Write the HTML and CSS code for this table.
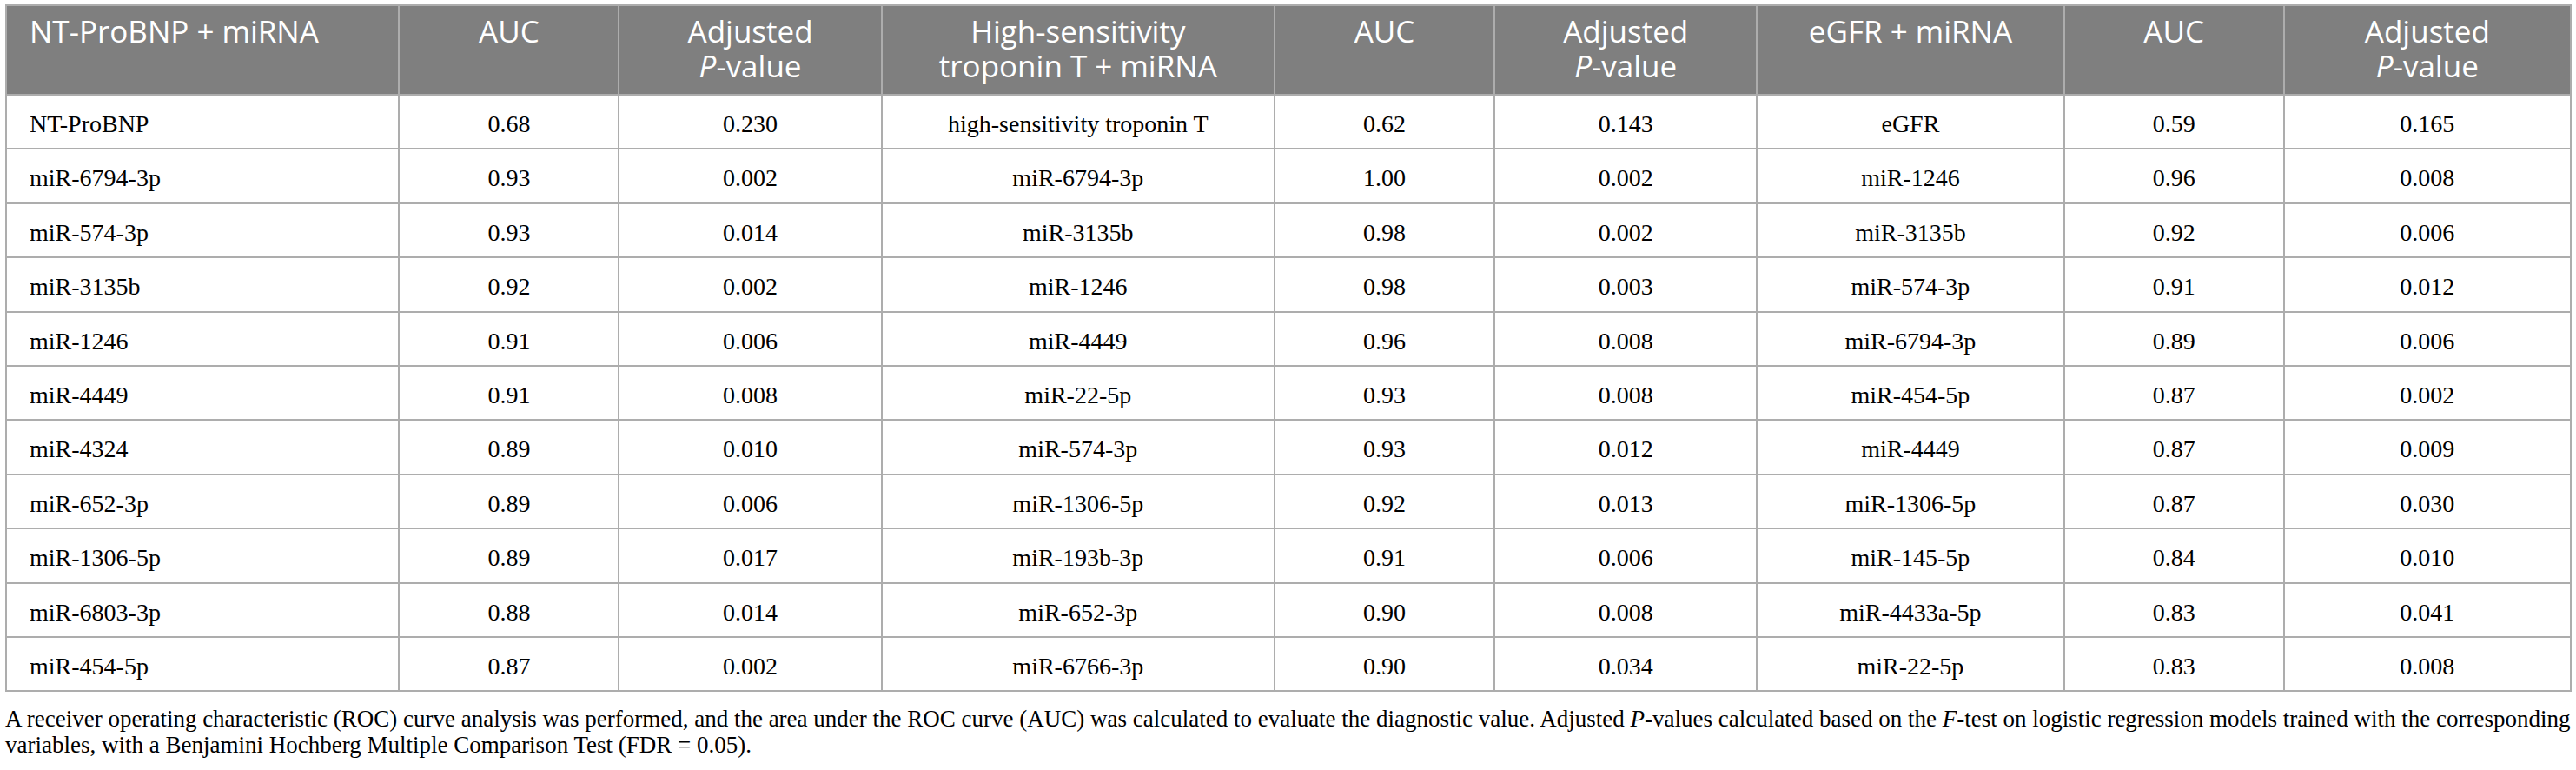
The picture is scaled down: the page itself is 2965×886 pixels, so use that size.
FILE: index.html
```html
<!DOCTYPE html>
<html lang="en">
<head>
    <meta charset="UTF-8">
    <title>Diagnostic value of miRNA combinations</title>
    <link rel="stylesheet" href="styles.css">
</head>
<body>
    <div class="table-wrap">
        <table class="auc-table">
            <colgroup>
                <col class="col-name">
                <col class="col-auc">
                <col class="col-p">
                <col class="col-name">
                <col class="col-auc">
                <col class="col-p">
                <col class="col-name-short">
                <col class="col-auc">
                <col class="col-p-last">
            </colgroup>
            <thead>
                <tr>
                    <th class="left">NT-ProBNP + miRNA</th>
                    <th>AUC</th>
                    <th>Adjusted<br><i>P</i>-value</th>
                    <th>High-sensitivity<br>troponin T + miRNA</th>
                    <th>AUC</th>
                    <th>Adjusted<br><i>P</i>-value</th>
                    <th>eGFR + miRNA</th>
                    <th>AUC</th>
                    <th>Adjusted<br><i>P</i>-value</th>
                </tr>
            </thead>
            <tbody>
                <tr>
                    <td class="left">NT-ProBNP</td><td>0.68</td><td>0.230</td>
                    <td>high-sensitivity troponin T</td><td>0.62</td><td>0.143</td>
                    <td>eGFR</td><td>0.59</td><td>0.165</td>
                </tr>
                <tr>
                    <td class="left">miR-6794-3p</td><td>0.93</td><td>0.002</td>
                    <td>miR-6794-3p</td><td>1.00</td><td>0.002</td>
                    <td>miR-1246</td><td>0.96</td><td>0.008</td>
                </tr>
                <tr>
                    <td class="left">miR-574-3p</td><td>0.93</td><td>0.014</td>
                    <td>miR-3135b</td><td>0.98</td><td>0.002</td>
                    <td>miR-3135b</td><td>0.92</td><td>0.006</td>
                </tr>
                <tr>
                    <td class="left">miR-3135b</td><td>0.92</td><td>0.002</td>
                    <td>miR-1246</td><td>0.98</td><td>0.003</td>
                    <td>miR-574-3p</td><td>0.91</td><td>0.012</td>
                </tr>
                <tr>
                    <td class="left">miR-1246</td><td>0.91</td><td>0.006</td>
                    <td>miR-4449</td><td>0.96</td><td>0.008</td>
                    <td>miR-6794-3p</td><td>0.89</td><td>0.006</td>
                </tr>
                <tr>
                    <td class="left">miR-4449</td><td>0.91</td><td>0.008</td>
                    <td>miR-22-5p</td><td>0.93</td><td>0.008</td>
                    <td>miR-454-5p</td><td>0.87</td><td>0.002</td>
                </tr>
                <tr>
                    <td class="left">miR-4324</td><td>0.89</td><td>0.010</td>
                    <td>miR-574-3p</td><td>0.93</td><td>0.012</td>
                    <td>miR-4449</td><td>0.87</td><td>0.009</td>
                </tr>
                <tr>
                    <td class="left">miR-652-3p</td><td>0.89</td><td>0.006</td>
                    <td>miR-1306-5p</td><td>0.92</td><td>0.013</td>
                    <td>miR-1306-5p</td><td>0.87</td><td>0.030</td>
                </tr>
                <tr>
                    <td class="left">miR-1306-5p</td><td>0.89</td><td>0.017</td>
                    <td>miR-193b-3p</td><td>0.91</td><td>0.006</td>
                    <td>miR-145-5p</td><td>0.84</td><td>0.010</td>
                </tr>
                <tr>
                    <td class="left">miR-6803-3p</td><td>0.88</td><td>0.014</td>
                    <td>miR-652-3p</td><td>0.90</td><td>0.008</td>
                    <td>miR-4433a-5p</td><td>0.83</td><td>0.041</td>
                </tr>
                <tr>
                    <td class="left">miR-454-5p</td><td>0.87</td><td>0.002</td>
                    <td>miR-6766-3p</td><td>0.90</td><td>0.034</td>
                    <td>miR-22-5p</td><td>0.83</td><td>0.008</td>
                </tr>
            </tbody>
        </table>

        <!-- table footnote -->
        <p class="footnote">
            A receiver operating characteristic (ROC) curve analysis was performed, and the area under the ROC curve (AUC) was calculated to evaluate the diagnostic value. Adjusted <i>P</i>-values calculated based on the <i>F</i>-test on logistic regression models trained with the corresponding variables, with a Benjamini Hochberg Multiple Comparison Test (FDR = 0.05).
        </p>
    </div>
</body>
</html>
```

FILE: styles.css
```css
body {
    margin: 0;
    background: #fff;
    font-family: "Liberation Serif", "Times New Roman", serif;
    color: #000;
}
.table-wrap {
    padding: 5px 5px 0 6px;
}
.auc-table {
    border-collapse: collapse;
    width: 2954px;
    table-layout: fixed;
    border: 2px solid #adadad;
}
.col-name {
    width: 452px;
}
.col-auc {
    width: 253px;
}
.col-p {
    width: 302px;
}
.col-name-short {
    width: 353px;
}
.col-p-last {
    width: 330px;
}
.auc-table th {
    background-color: #7f7f7f;
    color: #fff;
    font-family: "Open Sans", "Noto Sans", sans-serif;
    font-weight: normal;
    font-size: 35px;
    line-height: 40px;
    text-align: center;
    vertical-align: top;
    padding: 9px 26px 12px;
    border: 2px solid #adadad;
}
.auc-table td {
    font-size: 28px;
    line-height: 32px;
    text-align: center;
    vertical-align: top;
    padding: 17px 26px 11.4px;
    border: 2px solid #adadad;
    white-space: nowrap;
}
.auc-table .left {
    text-align: left;
}
.footnote {
    margin: 16px 0 0;
    font-size: 27px;
    line-height: 30px;
}
```
